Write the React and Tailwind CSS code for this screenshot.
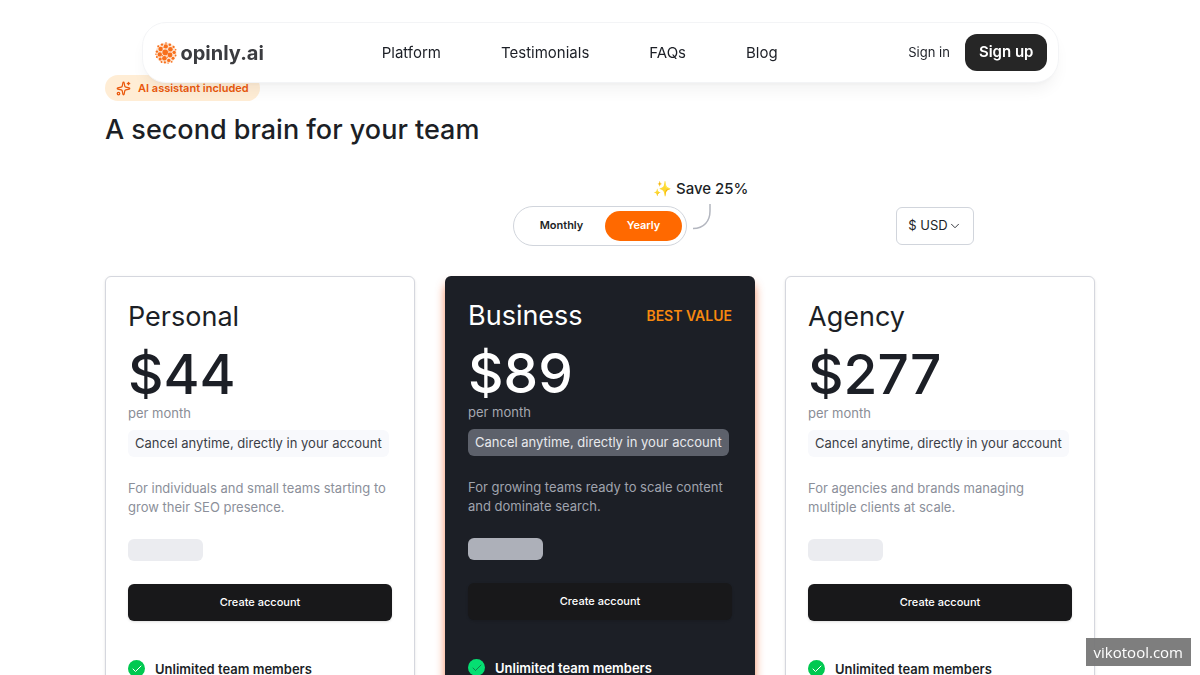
import React, { useState } from "react";
import { Check, ChevronDown, Sparkles } from "lucide-react";

const navLinks = ["Platform", "Testimonials", "FAQs", "Blog"];

const plans = [
  {
    name: "Personal",
    price: "$44",
    description: "For individuals and small teams starting to grow their SEO presence.",
  },
  {
    name: "Business",
    price: "$89",
    description: "For growing teams ready to scale content and dominate search.",
    featured: true,
  },
  {
    name: "Agency",
    price: "$277",
    description: "For agencies and brands managing multiple clients at scale.",
  },
];

const features = ["Unlimited team members"];

// [cx, cy, r]
const logoDots = [
  [10.2, 10.4, 2.8], [15.4, 7.2, 2.3], [15, 13, 2.4], [9.4, 16.2, 2.3], [4.8, 12.4, 2.2],
  [5.6, 7, 2.2], [10.8, 4.4, 2.1], [19.2, 10.4, 1.6], [18, 16.2, 1.5], [13.8, 18.4, 1.7],
  [5.2, 17, 1.5], [1.9, 9.6, 1.2], [7, 2.6, 1.2], [14.8, 2.7, 1.3], [18.6, 4.9, 1.1],
  [3.2, 4.3, 1], [1.9, 15, 1], [9.9, 20.4, 1.1], [20.7, 7.7, 0.8], [20.6, 13.5, 0.9],
  [16.7, 19.8, 0.9], [6.5, 20, 0.9], [11, 1.1, 0.8], [0.9, 12.3, 0.7], [12.3, 15.2, 0.6],
  [13, 9.8, 0.6], [7.4, 13.6, 0.6], [8.1, 5.6, 0.5], [13.1, 21.2, 0.6], [17.2, 10.2, 0.4],
];

function Logo() {
  return (
    <a href="#" className="flex items-center gap-1 text-[#3b3c40]">
      <svg viewBox="0 0 22 22" className="h-[22px] w-[22px] shrink-0 fill-[#f8701c]" aria-hidden="true">
        <circle cx="11" cy="11" r="10.500" className="fill-[#fde3cf]" />
        {logoDots.map(([cx, cy, r]) => (
          <circle key={`${cx}-${cy}`} cx={cx} cy={cy} r={r} />
        ))}
      </svg>
      <span className="text-[20px] leading-6 font-bold">opinly.ai</span>
    </a>
  );
}

function Header() {
  return (
    <header className="fixed inset-x-0 top-[22px] z-20 mx-auto flex h-[61px] w-11/12 max-w-[917px] items-center justify-between rounded-3xl border border-gray-100 bg-white pr-[10px] pl-3 shadow-lg shadow-black/5">
      <Logo />
      <nav className="flex gap-[60px] text-[15px] leading-6">
        {navLinks.map((link) => (
          <a key={link} href="#">
            {link}
          </a>
        ))}
      </nav>
      <div className="flex w-[152px] items-center justify-end gap-[15px]">
        <a href="#" className="text-[13px] whitespace-nowrap">
          Sign in
        </a>
        <button className="h-[37px] rounded-xl bg-[#262626] px-[14px] text-[15px] font-semibold whitespace-nowrap text-white">
          Sign up
        </button>
      </div>
    </header>
  );
}

function BillingToggle({ period, onChange }) {
  return (
    <div className="relative flex rounded-full border border-gray-300 bg-white p-1">
      {["Monthly", "Yearly"].map((option) => (
        <button
          key={option}
          aria-pressed={period === option}
          onClick={() => onChange(option)}
          className={`h-[30px] rounded-full text-[11px] font-semibold ${
            period === option ? "w-[77px] bg-[#ff6900] text-white" : "w-[87px]"
          }`}
        >
          {option}
        </button>
      ))}
      <div className="absolute -top-[29px] left-[139px] text-[15px] leading-[22px] font-medium whitespace-nowrap">
        ✨ Save 25%
      </div>
      <svg
        viewBox="0 0 20 27"
        className="absolute -top-[4px] left-[178px] h-[27px] w-5 fill-none stroke-[#b3b6bf] stroke-[1.5]"
        aria-hidden="true"
      >
        <path d="M18 1V8C18 18 12 25.500 1 25.500" />
      </svg>
    </div>
  );
}

function PlanCard({ plan }) {
  const { featured } = plan;
  return (
    <section
      className={`rounded-md pb-24 ${
        featured
          ? "bg-[#1c1f26] px-[23px] pt-[22px] text-white shadow-[0_8px_10px_rgba(240,90,30,0.7)]"
          : "border border-[#d5d7de] bg-white px-[22px] pt-[22px] shadow-sm"
      }`}
    >
      <div className="flex items-center justify-between">
        <h2 className="text-[27px] leading-9">{plan.name}</h2>
        {featured && <span className="text-[14px] font-semibold text-[#f7890f]">BEST VALUE</span>}
      </div>
      <p className="mt-[11px] mb-px text-[55px] leading-[56px] font-medium">{plan.price}</p>
      <p className={`text-[13px] leading-5 ${featured ? "text-[#a5a8b0]" : "text-[#8a8d96]"}`}>per month</p>
      <p
        className={`mt-[7px] inline-block rounded-md px-[7px] text-[13px] leading-[27px] whitespace-nowrap ${
          featured ? "bg-[#5d616b] text-[#e8e9ed]" : "bg-[#f8f9fc] text-[#3b3e46]"
        }`}
      >
        Cancel anytime, directly in your account
      </p>
      <p className={`mt-[22px] text-[13px] leading-[19px] ${featured ? "text-[#a0a4ae]" : "text-[#8b8f9a]"}`}>
        {plan.description}
      </p>
      <div className={`mt-[22px] h-[22px] w-[75px] rounded-md ${featured ? "bg-[#adb0b9]" : "bg-[#ebecf0]"}`} />
      <button className="mt-[23px] h-[37px] w-full rounded-md bg-[#18181a] text-[11px] font-medium text-white shadow-sm">
        Create account
      </button>
      <ul className="mt-[38px]">
        {features.map((feature) => (
          <li key={feature} className="flex items-center gap-[10px] text-[13px] leading-5 font-semibold">
            <span
              className={`flex h-[17px] w-[17px] items-center justify-center rounded-full ${
                featured ? "bg-[#05df72] text-[#1c1f26]" : "bg-[#00c950] text-white"
              }`}
            >
              <Check className={featured ? "h-3 w-3 stroke-1" : "h-3 w-3 stroke-2"} />
            </span>
            {feature}
          </li>
        ))}
      </ul>
    </section>
  );
}

export default function App() {
  const [period, setPeriod] = useState("Yearly");

  return (
    <div className="overflow-x-hidden bg-white font-['Inter',sans-serif] text-[#1c1f26]">
      <Header />
      <main className="mx-auto max-w-[990px] pt-[75px]">
        <div className="inline-flex h-[26px] items-center gap-[7px] rounded-full bg-[#ffedd5] px-[11px] text-[11px] font-semibold text-[#ea580c]">
          <Sparkles className="h-[15px] w-[15px]" />
          AI assistant included
        </div>
        <h1 className="mt-2 text-[27px] leading-10 font-medium">A second brain for your team</h1>

        <div className="mt-14 grid grid-cols-3 items-center gap-4">
          <div className="col-start-2 justify-self-center">
            <BillingToggle period={period} onChange={setPeriod} />
          </div>
          <div className="relative justify-self-center">
            <select
              aria-label="Currency"
              className="h-[38px] w-[78px] appearance-none rounded-md border border-gray-300 bg-white pl-[11px] text-[13px]"
            >
              <option>$ USD</option>
            </select>
            <ChevronDown className="pointer-events-none absolute top-3 right-3 h-[14px] w-[14px] stroke-[1.5]" />
          </div>
        </div>

        <div className="mt-[30px] grid grid-cols-3 gap-[30px]">
          {plans.map((plan) => (
            <PlanCard key={plan.name} plan={plan} />
          ))}
        </div>
      </main>
      <div className="fixed right-[9px] bottom-[9px] z-30 bg-[#777777]/95 px-2 font-['Open_Sans',sans-serif] text-[15px] leading-7 text-white">
        vikotool.com
      </div>
    </div>
  );
}
